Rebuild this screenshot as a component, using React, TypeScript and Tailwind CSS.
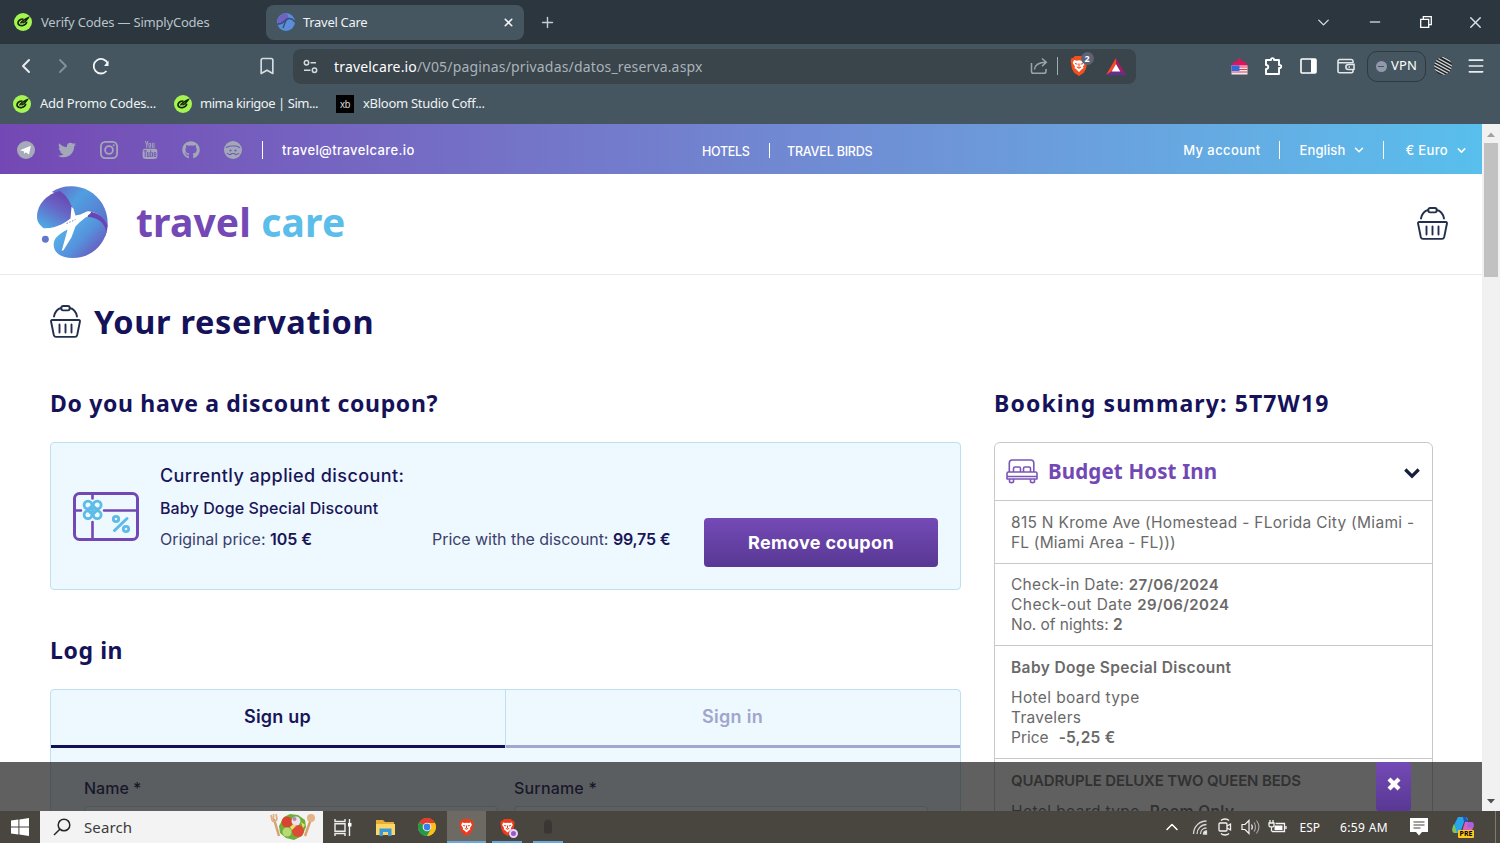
import React from 'react';
import { FaGithub, FaTwitter } from 'react-icons/fa';
import { TfiYoutube } from 'react-icons/tfi';
import { Bookmark, ChevronDown, ChevronLeft, ChevronRight, ChevronUp, Menu, Minus, Plus, X } from 'lucide-react';

function SimplyCodesIcon() {
  return (
    <svg width="18" height="18" viewBox="0 0 18 18" className="shrink-0">
      <circle cx="9" cy="9" r="9" fill="#a4f551" />
      <path d="M9.500 6C6 6 3.800 8 4 10.200c.2 2 2.500 2.900 5 2.300 2.300-.6 3.600-2 3.700-3.700" fill="none" stroke="#16240c" strokeWidth="1.700" />
      <path d="M6.500 10.500c1-2 3.200-3.700 7.700-5.700-1.600 2.800-3 4.200-5.700 5.200" fill="none" stroke="#16240c" strokeWidth="1.500" />
    </svg>
  );
}

function TravelMark({ size, id }: { size: number; id: string }) {
  return (
    <svg width={size} height={size} viewBox="0 0 74 74" className="shrink-0">
      <defs>
        <linearGradient id={id + 'a'} x1="0.800" y1="0.100" x2="0.300" y2="1">
          <stop offset="0" stopColor="#6a45b2" />
          <stop offset="0.450" stopColor="#6668c8" />
          <stop offset="1" stopColor="#4fa6e2" />
        </linearGradient>
        <linearGradient id={id + 'b'} x1="0" y1="0" x2="1" y2="0.700">
          <stop offset="0" stopColor="#6a62c4" />
          <stop offset="0.450" stopColor="#509fe0" />
          <stop offset="1" stopColor="#5a78cf" />
        </linearGradient>
        <linearGradient id={id + 'c'} x1="0.100" y1="0.300" x2="0.900" y2="0.900">
          <stop offset="0" stopColor="#55b4ea" />
          <stop offset="0.500" stopColor="#5591dc" />
          <stop offset="1" stopColor="#6d50b8" />
        </linearGradient>
      </defs>
      <path d="M16 6C26-1 42-2 54 5c12 7 20 20 18.500 37-3-9-9-15-17-16l-17 9C38 20 30 10 16 6z" fill={'url(#' + id + 'b)'} />
      <path d="M24 5C11 8 1 19 1 31c0 6 3 9 7 12h13l17-11C38 20 32 10 24 5z" fill={'url(#' + id + 'a)'} />
      <path d="M53 26c10 0 17 7 19.500 14 0 4-1 8-2.500 11-2-9-8-15-18-18z" fill="#6845b2" />
      <path d="M47 32c12-3 23 4 24.500 15C67 63 54 73 37 73c-12 0-20-6-19-15 1-8 9-10 15-16z" fill={'url(#' + id + 'c)'} />
      <path d="M5 43c11 1 21-3 30-10l1-12 2 2 2 7 5-1 6-3c4-1 6 0 4 2L44 37l-4 4-4 11-8 13-2 1 6-22C24 49 12 49 5 43z" fill="#fff" />
      <path d="M31 38l9-4" stroke="#5584cf" strokeWidth="1" strokeDasharray="1.500 1.500" />
      <circle cx="9.500" cy="54" r="3.500" fill="#6277cb" />
    </svg>
  );
}

function Basket() {
  return (
    <svg width="31" height="33" viewBox="0 0 31 33" fill="none" stroke="#22304d" strokeWidth="1.900" strokeLinecap="round" strokeLinejoin="round">
      <path d="M4 11.500C5 6.700 8 3.600 11.300 3M27 11.500c-1-4.800-4-7.900-7.300-8.500" />
      <rect x="11.300" y="1" width="8.400" height="4.400" rx="1.800" />
      <path d="M2.200 15h26.600c1 0 1.300.8 1.100 1.800L27.200 30c-.3 1.200-1 1.900-2.200 1.900H6C4.800 31.900 4.100 31.200 3.800 30L1.100 16.800C.9 15.800 1.200 15 2.200 15z" />
      <path d="M9.500 19.500v8M15.500 19.500v8M21.500 19.500v8" />
    </svg>
  );
}

function GiftCard() {
  return (
    <svg width="66" height="49" viewBox="0 0 66 49" fill="none" strokeLinecap="round">
      <rect x="1.500" y="1.500" width="63" height="46" rx="5" stroke="#7248b4" strokeWidth="3" />
      <path d="M2 18.500h6M31 18.500h33M19.500 2v4.500M19.500 30v17" stroke="#7248b4" strokeWidth="2.600" />
      <g stroke="#5cbbe8" strokeWidth="2.800">
        <circle cx="15" cy="13" r="3.900" />
        <circle cx="24.200" cy="13" r="3.900" />
        <circle cx="15" cy="22.800" r="3.900" />
        <circle cx="24.200" cy="22.800" r="3.900" />
        <path d="M17 15.500l5 5M22 15.500l-5 5" />
        <path d="M41.500 38.500l12.500-12" strokeWidth="3" />
        <circle cx="43" cy="27" r="2.700" />
        <circle cx="53" cy="37" r="2.700" />
      </g>
    </svg>
  );
}

function Bed() {
  return (
    <svg width="32" height="25" viewBox="0 0 32 25" fill="none" stroke="#7b55b8" strokeWidth="1.600" strokeLinejoin="round">
      <path d="M3.300 13V4c0-2 1-3 3-3h18.500c2 0 3 1 3 3v9" />
      <path d="M2.500 13h27c1 0 1.500.6 1.500 1.500V20H1v-5.500C1 13.600 1.500 13 2.500 13zM1 17.500h30" />
      <path d="M7.500 13V9.500c0-1 .5-1.500 1.500-1.500h4c1 0 1.500.5 1.500 1.500V13M17.500 13V9.500c0-1 .5-1.500 1.500-1.500h4c1 0 1.500.5 1.500 1.500V13" />
      <path d="M3.500 20v2.500c0 1.500 4 1.500 4 0V20M24.500 20v2.500c0 1.500 4 1.500 4 0V20" />
    </svg>
  );
}

function Brave({ size, color }: { size: number; color: string }) {
  return (
    <svg width={size} height={size} viewBox="0 0 20 20">
      <path d="M6 0h8l2 2h1.500l1 3-.6 2c0 5-2 8-3.400 10L10 20l-4.500-3C4 15 2.100 12 2.100 7l-.6-2 1-3H4z" fill={color} />
      <path d="M5 4l3 .8 2-.5 2 .5 3-.8 1.300 3-2.300 3.500.5 1.500-2 1.500L10 16l-2.500-2.500-2-1.500.5-1.500L3.700 7z" fill="#fff" />
      <path d="M6 7.500l2.500.8M14 7.500l-2.500.8M10 7.500v3M8 11l2 1 2-1" fill="none" stroke={color} strokeWidth="1.200" />
    </svg>
  );
}

function BrowserTabs() {
  return (
    <div className="flex h-[44px] shrink-0 items-center bg-[#2b363e]">
      <div className="flex w-[266px] items-center gap-[9px] pl-[14px] text-[13px] tracking-[-0.2px] text-[#b9c3c9]">
        <SimplyCodesIcon />
        <span className="pt-px">Verify Codes — SimplyCodes</span>
      </div>
      <div className="flex h-[35px] w-[258px] items-center rounded-[8px] bg-[#455660] pr-[9px] pl-[11px] text-[13px] tracking-[-0.3px] text-[#eef3f5]">
        <svg width="18" height="18" viewBox="0 0 18 18">
          <circle cx="9" cy="9" r="9" fill="#5a8edb" />
          <path d="M1 12C-1 6 3 1 9 0c3 2 3 6 1 8-3 1-5 4-9 4z" fill="#6e63c5" />
          <path d="M0 11c5 1 7-3 10-5 3-1 6 0 8 3" fill="none" stroke="#384e70" strokeWidth="1.500" />
          <path d="M9 7L6 15" stroke="#384e70" strokeWidth="1.300" />
        </svg>
        <span className="ml-2 flex-1 pt-px">Travel Care</span>
        <X size={13} strokeWidth={3} />
      </div>
      <Plus size={17} strokeWidth={2} className="ml-[15px] text-[#c6ced3]" />
      <div className="ml-auto flex items-center text-[#dce2e6]">
        <ChevronDown size={19} strokeWidth={1.600} className="mr-[34px]" />
        <Minus size={16} strokeWidth={2} className="mr-[37px] text-[#c0c7cb]" />
        <svg width="12" height="12" viewBox="0 0 12 12" fill="none" stroke="#fff" strokeWidth="1.300" className="mr-[34px]">
          <path d="M.7 3.300h8v8h-8zM3.300 3.300V.7h8v8H8.700" />
        </svg>
        <X size={19} strokeWidth={1.700} className="mr-[15px]" />
      </div>
    </div>
  );
}

function Toolbar() {
  return (
    <div className="flex h-[44px] shrink-0 items-center bg-[#455660] text-[#e7ecef]">
      <ChevronLeft size={24} strokeWidth={2} className="ml-[14px]" />
      <ChevronRight size={24} strokeWidth={1.800} className="ml-[13px] text-[#83919a]" />
      <svg width="20" height="20" viewBox="0 0 20 20" fill="none" stroke="#f3f5f6" strokeWidth="1.800" className="ml-[16px]">
        <path d="M15.500 15A7.300 7.300 0 1 1 16.800 7.500" />
        <path d="M17.500 4.500v5.500h-4.500z" fill="#f3f5f6" stroke="none" />
      </svg>
      <Bookmark size={20} strokeWidth={2} className="ml-[146px] text-[#d5dce0]" />
      <div className="ml-[16px] flex h-[35px] w-[843px] items-center rounded-[8px] bg-[#39444b] pl-[10px]">
        <svg width="15" height="15" viewBox="0 0 15 15" fill="none" stroke="#d4dade" strokeWidth="1.500">
          <circle cx="3.500" cy="3.700" r="2.200" />
          <circle cx="11.500" cy="11.300" r="2.200" />
          <path d="M7.500 3.700H13M1 11.300h6.500" />
        </svg>
        <span className="ml-[16px] pt-px text-[14px] tracking-[0.165px] text-[#a9b3b9]">
          <span className="text-white">travelcare.io</span>/V05/paginas/privadas/datos_reserva.aspx
        </span>
        <svg width="18" height="18" viewBox="0 0 18 18" fill="none" stroke="#9aa5ab" strokeWidth="1.500" className="ml-[327px]">
          <path d="M1.500 6v8.500c0 1.200.7 1.800 1.800 1.800h10.500c1.500 0 2.200-.6 2.200-1.800V12" />
          <path d="M4.500 12.500C5 8 8 5.300 16 5.300M12 1.500l4.300 3.800L12 9.300" />
        </svg>
        <span className="ml-[9px] h-[18px] w-px bg-[#a2acb1]" />
        <span className="relative ml-[11px] flex">
          <Brave size={20} color="#f4501e" />
          <span className="absolute -top-[4px] left-[12px] flex h-[13px] w-[13px] items-center justify-center rounded-full bg-[#5d6377] text-[9px] font-bold text-white">2</span>
        </span>
        <svg width="20" height="17" viewBox="0 0 20 17" className="ml-[17px]">
          <path d="M10 0L0 17l6-3.500L10 6z" fill="#ff4724" />
          <path d="M10 0l10 17-6-3.500L10 6z" fill="#9e1f63" />
          <path d="M0 17h20l-6-4H6z" fill="#662d91" />
          <path d="M10 6l4.300 7.500H5.700z" fill="#fff" />
        </svg>
      </div>
      <svg width="17" height="18" viewBox="0 0 17 18" className="ml-[95px]">
        <path d="M0 9C1 6 4 4 7.500 3.500V1h2v2.500C13 4 16 6 17 9z" fill="#e2125f" />
        <rect x="0.500" y="8.500" width="16" height="9" fill="#f5e9ee" />
        <path d="M8 10h8.500M8 12.500h8.500M.5 15h16" stroke="#df3a55" strokeWidth="1.200" />
        <rect x="0.500" y="8.500" width="8" height="5.500" fill="#2f6be0" />
      </svg>
      <svg width="19" height="19" viewBox="0 0 19 19" fill="none" stroke="#fff" strokeWidth="1.900" strokeLinejoin="round" className="ml-[16px]">
        <path d="M2 3h5c-.5-2.500 3.500-2.500 3 0h5v5c3-.5 3 3.500 0 3v6H2v-5c3 0 3-4 0-4z" />
      </svg>
      <svg width="17" height="16" viewBox="0 0 17 16" className="ml-[17px]">
        <rect x="1" y="1" width="15" height="14" rx="1" fill="none" stroke="#fff" strokeWidth="1.600" />
        <path d="M11 1h5v14h-5z" fill="#fff" />
      </svg>
      <svg width="18" height="16" viewBox="0 0 18 16" fill="none" stroke="#e2e7ea" strokeWidth="1.600" strokeLinejoin="round" className="ml-[20px]">
        <path d="M16 5V3.200c0-1-.6-1.700-1.600-1.700H2.700C1.600 1.500 1 2.200 1 3.200v10c0 1 .6 1.600 1.600 1.600h11.800c1 0 1.600-.6 1.600-1.600V12M1 4.700h15" />
        <path d="M17 5.500v6h-5.500c-3.500 0-3.500-5 0-5H17M11.500 9h1.500" />
      </svg>
      <div className="ml-[12px] flex h-[31px] w-[59px] items-center justify-center gap-1 rounded-[10px] border border-[#2e3940] text-[13px] tracking-[0.2px] text-white">
        <span className="flex h-[11px] w-[11px] items-center justify-center rounded-full bg-[#9098ac]">
          <span className="h-px w-[6px] bg-[#4a5563]" />
        </span>
        VPN
      </div>
      <svg width="18" height="18" viewBox="0 0 18 18" className="ml-[8px]">
        <defs>
          <clipPath id="avatarClip"><circle cx="9" cy="9" r="9" /></clipPath>
        </defs>
        <g clipPath="url(#avatarClip)">
          <rect width="18" height="18" fill="#1e2326" />
          <path d="M-2-2l22 12M-2 1.200l22 12M-2 4.400l22 12M-2 7.600l22 12M-2 10.800l22 12M2-3.500l22 12" stroke="#cdd1d3" strokeWidth="1.300" />
        </g>
      </svg>
      <Menu size={20} strokeWidth={2} className="ml-[14px]" />
    </div>
  );
}

function Bookmarks() {
  return (
    <div className="flex h-[36px] shrink-0 items-center bg-[#455660] pb-[5px] pl-[13px] text-[13px] text-[#eef2f4]">
      <div className="flex w-[160px] items-center gap-[9px] pt-px tracking-[-0.220px] whitespace-nowrap"><SimplyCodesIcon />Add Promo Codes...</div>
      <div className="flex w-[163px] items-center gap-[8px] pt-px pl-px tracking-[-0.450px] whitespace-nowrap"><SimplyCodesIcon />mima kirigoe | Sim...</div>
      <div className="flex items-center gap-[9px] pt-px tracking-[-0.280px]">
        <span className="flex h-[18px] w-[18px] items-center justify-center bg-black font-['Liberation_Sans'] text-[10px] text-[#d6d6d6]">xb</span>
        xBloom Studio Coff...
      </div>
    </div>
  );
}

function TopBar() {
  return (
    <div className="flex h-[50px] items-center bg-linear-to-r from-[#7448b4] to-[#58bfec] pt-[2px] font-['Inter',sans-serif] text-[13px] font-medium text-white">
      <div className="flex w-[702px] items-center pl-[17px] text-[#a2a8b8]">
        <svg width="18" height="18" viewBox="0 0 18 18">
          <circle cx="9" cy="9" r="9" fill="#a5abb8" />
          <path d="M3 9.200L13.800 4.800 12 13.500 8.800 11.200 7.300 12.800 6.800 10.300z" fill="#fff" />
        </svg>
        <FaTwitter size={18} className="ml-[23px]" />
        <svg width="18" height="18" viewBox="0 0 18 18" fill="none" stroke="#a2a8b8" strokeWidth="1.800" className="ml-6">
          <rect x="0.900" y="0.900" width="16.200" height="16.200" rx="4.500" />
          <circle cx="9" cy="9" r="3.900" />
          <circle cx="13.700" cy="4.300" r="1" fill="#a2a8b8" stroke="none" />
        </svg>
        <TfiYoutube size={18} className="ml-[23px]" />
        <FaGithub size={18} className="ml-[23px]" />
        <svg width="18" height="18" viewBox="0 0 18 18" className="ml-6">
          <circle cx="9" cy="9" r="9" fill="#a2a8b8" />
          <path d="M2 6.700C3.800 6.200 4.800 5 6.500 5h5c1.700 0 2.700 1.200 4.500 1.700M3 12c1.200 1.500 2.500 1.700 3.700 1.500l1-1h2.600l1 1c1.200.2 2.500 0 3.700-1.500" fill="none" stroke="#7358ba" strokeWidth="1.200" />
          <circle cx="6.500" cy="9.500" r="1.100" fill="#7358ba" />
          <circle cx="11.500" cy="9.500" r="1.100" fill="#7358ba" />
        </svg>
        <span className="ml-[20px] h-[18px] w-px bg-white" />
        <span className="ml-[19px] pt-[2px] tracking-[0.4px] text-white">travel@travelcare.io</span>
      </div>
      <div className="flex items-center pt-[4px] text-[12.500px]">
        <span className="w-[67px] tracking-[-0.3px]">HOTELS</span>
        <span className="-mt-[4px] h-[15px] w-px bg-white" />
        <span className="ml-[17px] tracking-[-0.2px]">TRAVEL BIRDS</span>
      </div>
      <div className="ml-auto flex items-center pr-[14px]">
        <span className="pt-[2px] tracking-[0.420px]">My account</span>
        <span className="ml-[18px] h-[18px] w-px bg-white" />
        <span className="ml-[20px] pt-[2px] tracking-[0.1px]">English</span>
        <ChevronDown size={14} strokeWidth={2.700} className="ml-[7px]" />
        <span className="ml-[17px] h-[18px] w-px bg-white" />
        <span className="ml-[21px] pt-[2px] tracking-[0.350px]">€ Euro</span>
        <ChevronDown size={13} strokeWidth={2.700} className="ml-[7px]" />
      </div>
    </div>
  );
}

function Header() {
  return (
    <div className="flex h-[101px] items-center border-b border-[#ebebeb] pl-[36px]">
      <div className="-mt-[4px]"><TravelMark size={73} id="logo" /></div>
      <div className="-mt-[6px] ml-[27px] text-[39px] leading-none font-bold tracking-[0.150px] text-[#7449b5]">
        travel <span className="text-[#5bbde9]">care</span>
      </div>
      <div className="mr-[34px] ml-auto -mt-px"><Basket /></div>
    </div>
  );
}

function CouponCard() {
  return (
    <div className="mt-[22px] flex h-[148px] rounded-[4px] border border-[#bddff0] bg-[#eef8ff] pl-[22px] font-['Inter',sans-serif] text-[#191558]">
      <div className="mt-[49px] w-[66px] shrink-0"><GiftCard /></div>
      <div className="ml-[21px] w-[544px] pt-[20px] whitespace-nowrap">
        <div className="h-[33px] text-[18px] leading-[25px] font-medium tracking-[0.420px]">Currently applied discount:</div>
        <div className="h-[31px] text-[16px] leading-[25px] font-medium tracking-[0.110px]">Baby Doge Special Discount</div>
        <div className="flex text-[16px] leading-[24px] text-[#3a3f6c]">
          <div className="w-[272px] tracking-[-0.030px]">Original price: <b className="font-semibold text-[#191558]">105 €</b></div>
          <div className="tracking-[-0.050px]">Price with the discount: <b className="font-semibold tracking-[-0.2px] text-[#191558]">99,75 €</b></div>
        </div>
      </div>
      <button className="mt-[75px] h-[49px] w-[234px] rounded-[4px] bg-linear-to-b from-[#744ab6] to-[#583894] pb-px text-[18px] font-bold tracking-[0.350px] text-white">Remove coupon</button>
    </div>
  );
}

function LoginBox() {
  return (
    <div className="mt-[22px] h-[200px] rounded-t-[4px] border border-[#bddff0] bg-[#eef8ff] font-['Inter',sans-serif] text-[#191558]">
      <div className="flex h-[58px] text-[18px] font-semibold">
        <div className="flex w-[454px] items-center justify-center border-b-[3px] border-[#140f57] pr-px pb-[2px] tracking-[0.2px]">Sign up</div>
        <div className="w-px bg-[#bddff0]" />
        <div className="flex flex-1 items-center justify-center border-b-[3px] border-[#a3a7cd] pr-px pb-[2px] tracking-[0.280px] text-[#a0a6cb]">Sign in</div>
      </div>
      <div className="flex pt-[28px] pl-[33px] text-[16px] leading-6 font-medium">
        <div className="w-[430px]">
          <div>Name *</div>
          <div className="mt-[6px] h-12 w-[414px] rounded-[4px] border border-[#bddff0] bg-[#f5fbff]" />
        </div>
        <div>
          <div className="tracking-[0.180px]">Surname *</div>
          <div className="mt-[6px] h-12 w-[414px] rounded-[4px] border border-[#bddff0] bg-[#f5fbff]" />
        </div>
      </div>
    </div>
  );
}

function Summary() {
  return (
    <div className="mt-[22px] h-[500px] rounded-[6px] border border-[#c9c9c9] font-['Inter',sans-serif] text-[15.500px] leading-[20px] whitespace-nowrap text-[#696969]">
      <div className="flex h-[58px] items-center border-b border-[#c9c9c9] pl-[11px]">
        <Bed />
        <span className="-mt-[2px] ml-[10px] font-['Noto_Sans',sans-serif] text-[20.500px] font-bold tracking-[0.150px] text-[#7248b5]">Budget Host Inn</span>
        <svg width="16" height="11" viewBox="0 0 16 11" fill="none" stroke="#15203a" strokeWidth="3.200" className="mt-[3px] mr-[12px] ml-auto">
          <path d="M1.300 1.500L8 8.200l6.700-6.700" />
        </svg>
      </div>
      <div className="h-[63px] border-b border-[#c9c9c9] pt-[12px] pl-[16px]">
        <div className="tracking-[0.290px]">815 N Krome Ave (Homestead - FLorida City (Miami -</div>
        <div className="tracking-[0.180px]">FL (Miami Area - FL)))</div>
      </div>
      <div className="h-[82px] border-b border-[#c9c9c9] pt-[11px] pl-[16px]">
        <div className="tracking-[0.3px]">Check-in Date: <b className="text-[15px] font-semibold tracking-[0.3px]">27/06/2024</b></div>
        <div className="tracking-[0.450px]">Check-out Date <b className="text-[15px] font-semibold tracking-[0.4px]">29/06/2024</b></div>
        <div className="tracking-[-0.050px]">No. of nights: <b className="font-semibold">2</b></div>
      </div>
      <div className="h-[113px] border-b border-[#c9c9c9] pt-[12px] pl-[16px]">
        <div className="mb-[10px] font-semibold tracking-[0.380px]">Baby Doge Special Discount</div>
        <div className="tracking-[0.380px]">Hotel board type</div>
        <div className="tracking-[0.280px]">Travelers</div>
        <div className="flex gap-[10px]">Price <b className="font-semibold tracking-[0.2px]">-5,25 €</b></div>
      </div>
      <div className="pt-[12px] pl-[16px]">
        <div className="mb-[11px] text-[15px] font-semibold tracking-[-0.160px]">QUADRUPLE DELUXE TWO QUEEN BEDS</div>
        <div className="flex gap-[10px] tracking-[0.380px]">Hotel board type <b className="font-semibold">Room Only</b></div>
      </div>
    </div>
  );
}

function SaladArt() {
  return (
    <svg width="46" height="28" viewBox="0 0 46 28">
      <path d="M4 6l5 17" stroke="#d99f6c" strokeWidth="2.400" />
      <path d="M1 2l1 5c1 2 4 2 5-1L6 1M3.500 1v5" fill="none" stroke="#e0ae80" strokeWidth="1.700" />
      <path d="M41 6l-6 17" stroke="#d99f6c" strokeWidth="2.400" />
      <circle cx="41" cy="5" r="4" fill="#e3b386" />
      <path d="M9 13l5-9 6-3 8 1 7 5 1 7-4 9-8 4-8-2-6-5z" fill="#6fae38" />
      <circle cx="17" cy="9" r="5.500" fill="#d9432f" />
      <circle cx="28" cy="18" r="6" fill="#dd4b35" />
      <circle cx="17" cy="19" r="4.500" fill="#b7da72" />
      <circle cx="26" cy="8" r="4.500" fill="#ece2ee" />
      <circle cx="24.500" cy="6" r="2" fill="#b287b9" />
      <path d="M20 14l4-3 2 2-4 4zM31 9l4 3-2 3z" fill="#f5dc6a" />
    </svg>
  );
}

function Taskbar() {
  return (
    <div className="flex h-[32px] shrink-0 items-center bg-[#49453f] text-[12px] text-white">
      <svg width="18" height="18" viewBox="0 0 18 18" className="ml-[11px]" fill="#fff">
        <path d="M0 2.600l7.400-1v7H0zM8.400 1.400L18 0v8.600H8.400zM0 9.500h7.400v7L0 15.500zM8.400 9.500H18V18l-9.600-1.400z" />
      </svg>
      <div className="ml-[11px] flex h-[32px] w-[283px] items-center bg-[#f3f3f3] pl-[13px] text-[#3b3b3b]">
        <svg width="18" height="18" viewBox="0 0 18 18" fill="none" stroke="#262626" strokeWidth="1.500">
          <circle cx="11" cy="7" r="5.800" />
          <path d="M6.800 11.200L1 17" />
        </svg>
        <span className="ml-[13px] pt-px text-[15px] tracking-[0.1px]">Search</span>
        <span className="mr-[7px] ml-auto"><SaladArt /></span>
      </div>
      <svg width="18" height="17" viewBox="0 0 18 17" fill="none" stroke="#eee" strokeWidth="1.400" className="ml-[11px]">
        <path d="M1 0v2.500h10V0M1 17v-2.500h10V17M1 4.700h10v7.500H1zM15.500 0v17" />
        <rect x="14" y="4" width="3.500" height="3.500" fill="#fff" stroke="none" />
      </svg>
      <svg width="19" height="17" viewBox="0 0 19 17" className="ml-[24px]">
        <path d="M0 1h7l2 2h9v13H0z" fill="#e9ae33" />
        <path d="M0 5h19v11H0z" fill="#fcd667" />
        <path d="M3.500 17V9.500h12V17h-3.500v-4h-5v4z" fill="#3a9ad9" />
      </svg>
      <svg width="18" height="18" viewBox="0 0 18 18" className="ml-[23px]">
        <circle cx="9" cy="9" r="9" fill="#fbc116" />
        <path d="M9 9L1.200 4.500A9 9 0 0 1 16.800 4.500z" fill="#e33b2e" />
        <path d="M9 9L1.200 4.500A9 9 0 0 0 9 18l4-6.700z" fill="#229a4a" />
        <path d="M9 5h7.900A9 9 0 0 1 9 18l4-6.700z" fill="#fbc116" />
        <circle cx="9" cy="9" r="4.300" fill="#fff" />
        <circle cx="9" cy="9" r="3.400" fill="#3b7ded" />
      </svg>
      <div className="ml-[11px] flex h-[32px] w-[39px] items-center justify-center border-b-2 border-[#69a9dc] bg-[#6d6963] pt-[2px]"><Brave size={17} color="#f03a1c" /></div>
      <div className="ml-[6px] flex h-[32px] w-[30px] items-center justify-center border-b-2 border-[#69a9dc] pt-[2px]">
        <span className="relative flex">
          <Brave size={17} color="#f03a1c" />
          <span className="absolute -right-[2px] -bottom-[2px] h-[9px] w-[9px] rounded-full border-2 border-[#e5d5f6] bg-[#9956c9]" />
        </span>
      </div>
      <div className="ml-[11px] flex h-[32px] w-[30px] items-center justify-center border-b-2 border-[#69a9dc]">
        <svg width="10" height="15" viewBox="0 0 10 15"><path d="M1 5c0-6 8-6 8 0v8c0 2-8 2-8 0z" fill="#393733" /></svg>
      </div>
      <div className="ml-auto flex items-center">
        <ChevronUp size={20} strokeWidth={1.900} />
        <svg width="16" height="16" viewBox="0 0 16 16" fill="none" stroke="#d8d8d8" strokeWidth="1.300" className="ml-[10px]">
          <path d="M1.500 15C1.500 8 7 2 14.500 2M5 15c0-5 4-9.500 9.500-9.500M8.500 15c0-3.500 2.500-6 6-6" />
          <path d="M11.500 15c0-1.500 1-3 3-3v3z" fill="#fff" />
        </svg>
        <svg width="14" height="18" viewBox="0 0 14 18" fill="none" stroke="#f3f3f3" strokeWidth="1.300" className="ml-[10px]">
          <path d="M3 2.500c2-2 6-2 8 0M3 15.500c2 2 6 2 8 0" />
          <rect x="1" y="5" width="8" height="8" rx="1" />
          <path d="M9 8l3.500-2v6L9 10" />
        </svg>
        <svg width="19" height="16" viewBox="0 0 19 16" fill="none" stroke="#f3f3f3" strokeWidth="1.200" className="ml-[9px]">
          <path d="M1 5.500h3l4-4v13l-4-4H1z" />
          <path d="M10.500 5.500c1 1.500 1 3.500 0 5" />
          <path d="M13 3.500c2 2.500 2 6.500 0 9M15.500 1.500c3 4 3 9 0 13" stroke="#a8a6a3" />
        </svg>
        <svg width="19" height="14" viewBox="0 0 19 14" fill="none" stroke="#f3f3f3" strokeWidth="1.300" className="ml-[8px]">
          <path d="M2 0v3M5 0v3M1 3h5v2.500c0 1-1 1.500-2.500 1.500S1 6.500 1 5.500zM3.500 7v4.500" />
          <path d="M7.500 3.500h9v8H4M18 6v3" />
          <rect x="6.500" y="5.500" width="8" height="4.500" fill="#fff" stroke="none" />
        </svg>
        <span className="ml-[13px] pt-px">ESP</span>
        <span className="ml-[20px] pt-px tracking-[0.350px]">6:59 AM</span>
        <svg width="18" height="18" viewBox="0 0 18 18" className="ml-[22px]">
          <path d="M0 0h18v14h-6l-3 3.500L6 14H0z" fill="#fff" />
          <path d="M3.500 4h11M3.500 7h11M3.500 10h7" stroke="#49453f" strokeWidth="1.200" />
        </svg>
        <span className="relative mr-[20px] ml-[24px] h-[22px] w-[23px]">
          <svg width="22" height="21" viewBox="0 0 22 21">
            <path d="M6 1h7c2 0 2.500 1 3 3l-4 2-4 11H3c-3 0-3-3-2-6z" fill="#28a5e8" />
            <path d="M2 8l3 9H2c-2-1-2-4-1-7z" fill="#8bc34a" />
            <path d="M11 1h3l2 5h-4z" fill="#1f55c9" />
            <path d="M13 6h6c3 0 3 3 2 6l-3 7H9z" fill="#d862c2" />
            <path d="M16 6h3c3 0 3 3 2 6l-6-1z" fill="#a960e0" />
          </svg>
          <span className="absolute top-[14px] left-[6px] h-[8px] w-[16px] rounded-[1px] bg-[#ffc81f] text-center text-[7px] leading-[8px] font-bold text-black">PRE</span>
        </span>
        <span className="h-[32px] w-px bg-[#7d7a76]" />
        <span className="w-[4px]" />
      </div>
    </div>
  );
}

export default function App() {
  return (
    <div className="flex h-[843px] w-[1500px] flex-col overflow-hidden bg-white font-['Noto_Sans',sans-serif]">
      <BrowserTabs />
      <Toolbar />
      <Bookmarks />
      <div className="flex h-[687px] shrink-0">
        <div className="relative w-[1482px] overflow-hidden bg-white">
          <TopBar />
          <Header />
          <div className="mt-[23px] flex h-[48px] items-center pl-[50px]">
            <div className="-mt-px"><Basket /></div>
            <h1 className="ml-[13px] text-[32.500px] leading-none font-bold tracking-[0.650px] text-[#15125a]">Your reservation</h1>
          </div>
          <div className="flex pt-[41px] pl-[50px]">
            <div className="w-[911px]">
              <h2 className="h-[33px] text-[23px] leading-8 font-bold tracking-[0.670px] text-[#15125a]">Do you have a discount coupon?</h2>
              <CouponCard />
              <h2 className="mt-[44px] h-[33px] text-[23px] leading-8 font-bold tracking-[0.6px] text-[#15125a]">Log in</h2>
              <LoginBox />
            </div>
            <div className="ml-[33px] w-[439px]">
              <h2 className="h-[33px] text-[23px] leading-8 font-bold tracking-[1.120px] whitespace-nowrap text-[#15125a]">Booking summary: 5T7W19</h2>
              <Summary />
            </div>
          </div>
          <div className="absolute inset-x-0 bottom-0 flex h-[49px] justify-end bg-[#191919]/69 pr-[71px]">
            <div className="flex h-[49px] w-[35px] items-start justify-center rounded-[3px] bg-linear-to-b from-[#744ab6] to-[#583894] pt-[15px] text-white">
              <svg width="14" height="14" viewBox="0 0 14 14" stroke="#fff" strokeWidth="4.200"><path d="M2 2l10 10M12 2L2 12" /></svg>
            </div>
          </div>
        </div>
        <div className="flex w-[18px] flex-col items-center bg-[#f1f1f1]">
          <svg width="10" height="5" viewBox="0 0 10 5" className="mt-[8px]"><path d="M1 5l4-4.500L9 5z" fill="#a0a0a0" /></svg>
          <div className="mt-[6px] h-[134px] w-[14px] bg-[#c1c1c1]" />
          <svg width="10" height="5" viewBox="0 0 10 5" className="mt-auto mb-[7px]"><path d="M1 0l4 4.500L9 0z" fill="#505050" /></svg>
        </div>
      </div>
      <Taskbar />
    </div>
  );
}
